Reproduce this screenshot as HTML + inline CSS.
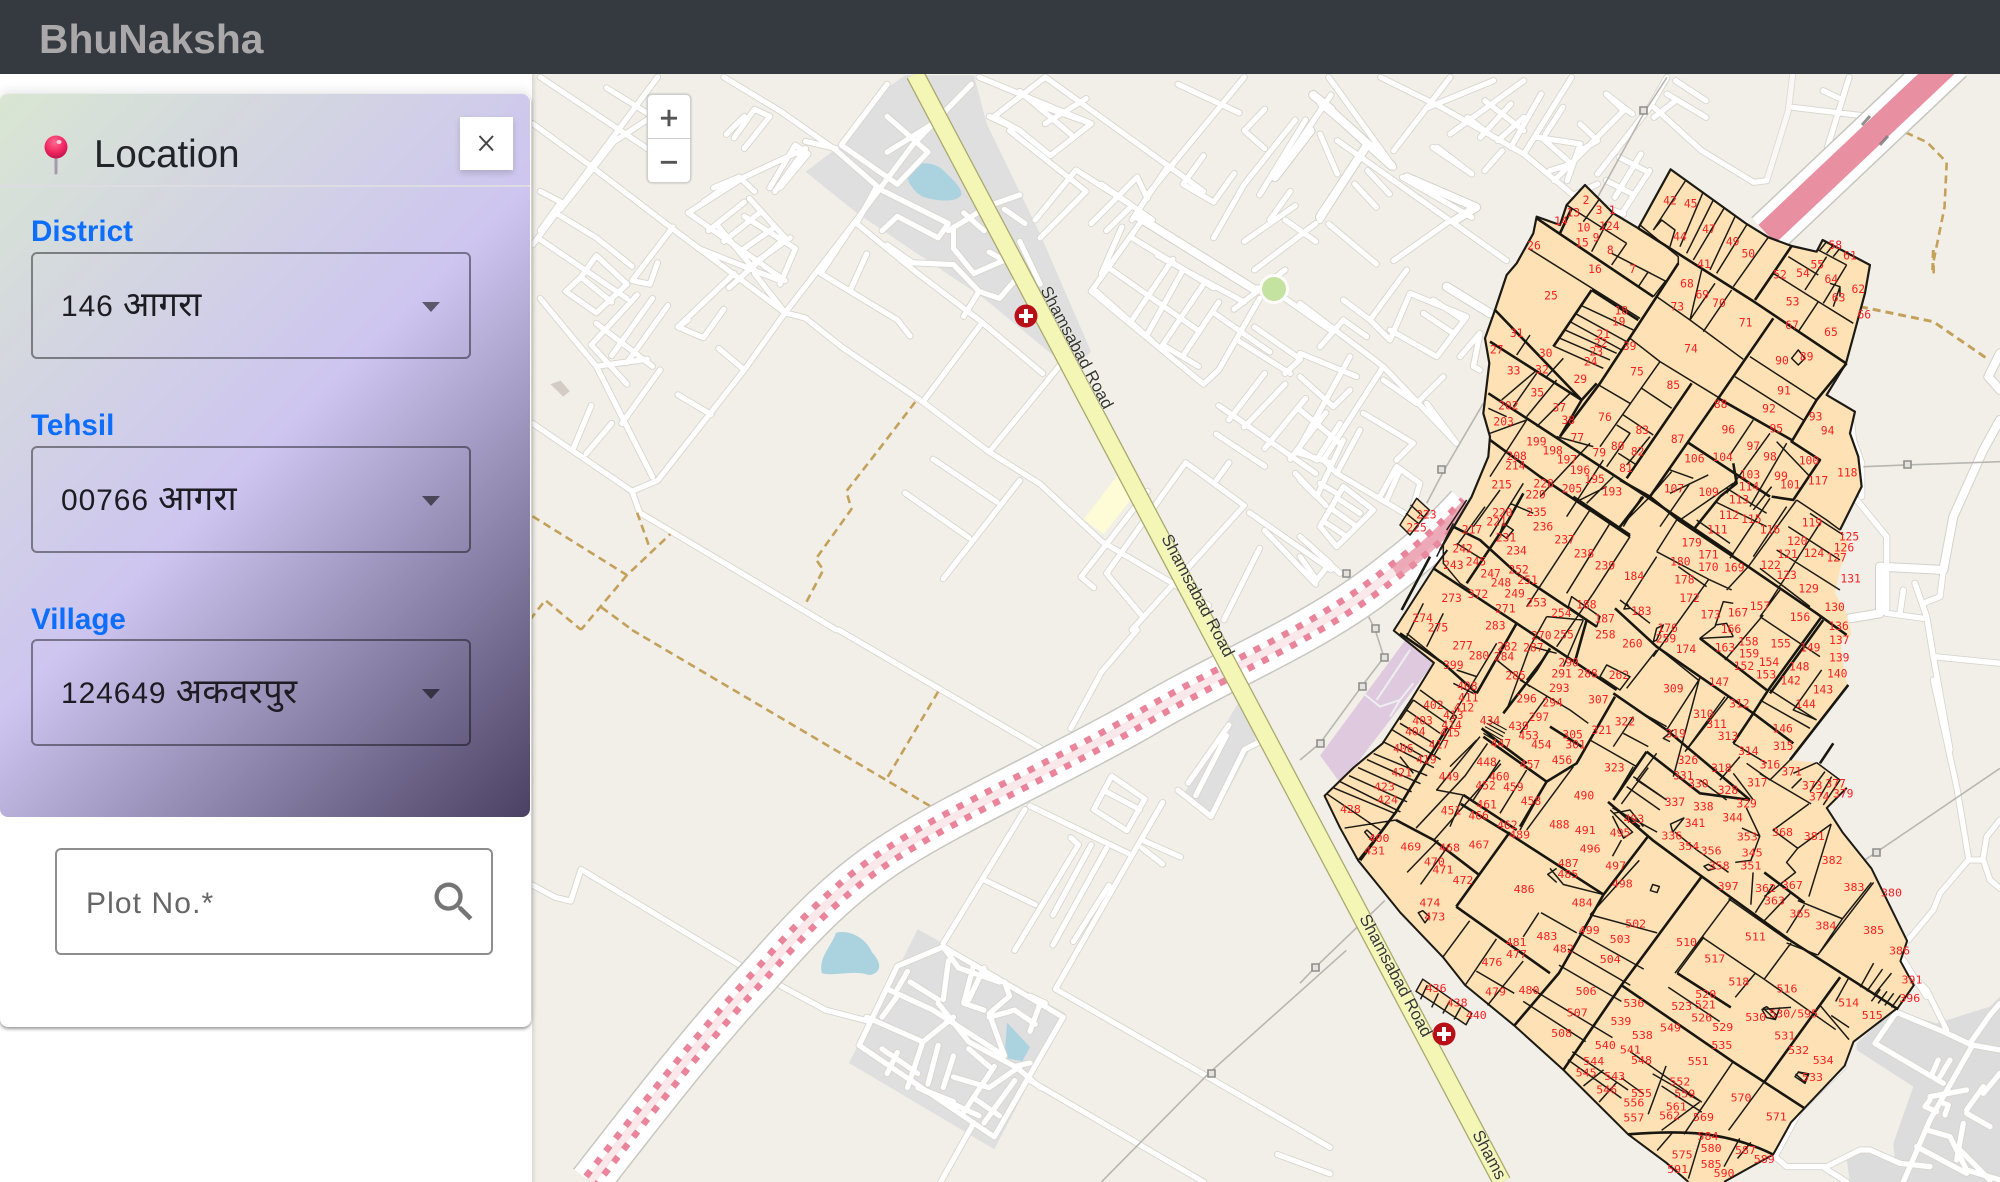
<!DOCTYPE html>
<html lang="en"><head><meta charset="utf-8"><title>BhuNaksha</title>
<style>
html,body{margin:0;padding:0;width:2000px;height:1182px;overflow:hidden;background:#fff;font-family:"Liberation Sans","Noto Sans Devanagari","Lohit Devanagari",FreeSans,"DejaVu Sans",sans-serif}
#map{position:absolute;left:0;top:0;width:2000px;height:1182px;filter:blur(.35px)}
#map path,#map polygon,#map rect,#map circle{vector-effect:non-scaling-stroke}
#map .lb text{font:26px "DejaVu Sans Mono","Liberation Mono",monospace;fill:#ff1f1f;text-anchor:middle;dominant-baseline:central}
#map .lb3 text{font:34px "DejaVu Sans Mono","Liberation Mono",monospace;fill:#ff1f1f;text-anchor:middle;dominant-baseline:central}
.rl{font:17px "Liberation Sans",sans-serif;fill:#36362c;stroke:#fff;stroke-opacity:.45;stroke-width:1.5px;paint-order:stroke}
#hdr{position:absolute;left:0;top:0;width:2000px;height:74px;background:#353940}
#brand{position:absolute;left:39px;top:15px;font-size:40.8px;line-height:48px;font-weight:700;color:#aaa8a9}
#left{position:absolute;left:0;top:74px;width:532px;height:1108px;background:#fff}
#card{position:absolute;left:0;top:94px;width:531px;height:933px;background:#fff;border-radius:8px;box-shadow:0 2px 3px rgba(0,0,0,.4),0 -5px 9px rgba(0,0,0,.07)}
#grad{position:absolute;left:0;top:94px;width:530px;height:723px;border-radius:8px;background:linear-gradient(135deg,#d9e6d2 0%,#cdc5f0 50%,#4a4163 100%)}
#div{position:absolute;left:0;top:185px;width:530px;height:2px;background:#dcdce2}
#loc{position:absolute;left:94px;top:133px;font-size:38.5px;line-height:44px;color:#212529}
#close{position:absolute;left:460px;top:117px;width:53px;height:53px;background:#fff;box-shadow:0 3px 6px rgba(0,0,0,.16)}
.lab{position:absolute;left:31px;font-size:29.6px;line-height:34px;font-weight:700;color:#0d6efd}
.sel{position:absolute;left:31px;width:436px;height:103px;border:2px solid rgba(0,0,0,.42);border-radius:6px}
.sel span{position:absolute;left:28px;top:33px;font-size:30px;line-height:36px;letter-spacing:.9px;color:#1c1c22;white-space:nowrap}
.sel b{font-weight:400;font-size:34.5px;letter-spacing:.3px}
.sel i{position:absolute;left:389px;top:48px;width:0;height:0;border-left:9.5px solid transparent;border-right:9.5px solid transparent;border-top:10px solid rgba(0,0,0,.54)}
#plot{position:absolute;left:55px;top:848px;width:434px;height:103px;border:2px solid #8e8e8e;border-radius:6px;background:#fff}
#plot span{position:absolute;left:29px;top:36px;font-size:30px;line-height:36px;letter-spacing:1.1px;color:#666}
#zc{position:absolute;left:647px;top:94px;width:42px;height:87px;background:#fff;border:1px solid #cfcfcc;border-radius:5px;box-shadow:0 0 2px rgba(0,0,0,.25)}
#zc div{position:absolute;left:0;width:42px;height:43px;text-align:center;font:400 32px/47px "Liberation Sans",sans-serif;color:#555;-webkit-text-stroke:.6px #555}
</style></head><body>
<svg id="map" viewBox="0 0 2000 1182" xmlns="http://www.w3.org/2000/svg">
<defs>
<g id="roads" fill="none" stroke-linecap="round" stroke-linejoin="round">
<g transform="matrix(.5102 0 0 .357 530 70)">
<path d="M5 150L120 270 275 440 500 680 540 695 610 775 770 930 900 1070 1000 1160 1120 1320 1250 1430 1330 1500M380 20L490 115 600 225 680 325 640 430 760 570 880 700 1005 850M5 990L200 1180 215 1240 600 1568M865 40L750 210 640 420 500 680 420 840 250 1150 200 1180M1060 790L900 1070M960 1150L810 1425M885 710L770 930M570 570L720 700 745 745M570 570L640 420M630 610L660 515M440 570L500 680M310 400L500 590M310 400L420 300 540 220 480 340M20 475L190 640M120 270L5 490M165 200L60 390M250 20L120 270M150 50L240 130 165 200M20 20L230 220M280 440L200 590 235 600 250 540M400 570L290 720 340 750 380 670M290 720L310 700M380 670L340 750M370 780L420 840M290 910L355 965M790 1090L915 1210M735 1185L860 1310M1210 1180L1080 1420 1105 1450M1285 1100L1130 1410 1200 1530M1285 1100L1400 1220 1180 1568M1345 1020L1440 1110M1350 940L1540 1130M1370 1100L1345 1150M600 220L540 200M700 40L610 210 720 320 780 230 700 130M790 150L700 230M680 330L820 430 800 470 720 410 690 450M830 440L830 500 870 570 950 520M820 450L900 380 960 350M850 400L890 450M930 390L970 430M900 510L950 550M700 490L750 540 830 545 880 620 850 690M880 620L920 640 950 590 990 610M960 480L1000 600M1010 20L1320 340M880 20L1100 150 1020 240 960 170 910 130 1010 20M960 60L1060 180M940 170L1090 340 1000 470M1070 280L1180 380 1130 450M1070 280L990 420M1200 420L1100 620 1320 880 1350 840 1430 640M1160 440L1120 570M1260 530L1180 700M1280 560L1210 740M1320 600L1240 770M1350 650L1280 800M1210 360L1190 300 1100 430M1250 270L1180 420M1400 20L1210 350M1270 40L1390 120M1320 240L1280 320 1340 370 1380 290M1440 110L1400 170 1440 220M1500 140L1400 320 1340 470M1570 70L1460 300M1490 340L1450 420M1520 140L1430 350M1480 420L1540 480M1460 620L1570 730M1420 720L1510 810 1480 850M1440 850L1370 980M1480 880L1400 1000M1520 920L1440 1060M1560 960L1490 1090M1500 1070L1570 1100M1500 1130L1560 1220M1440 1290L1540 1440M1410 1240L1570 1400M1430 1340L1360 1540M130 710L240 830M50 400L130 470 200 550M20 640L130 830 240 1140M100 580L130 520 190 600 130 680 70 620 100 580M100 580L160 650M210 630L120 770 190 880M240 640L160 800M270 660L190 820M130 830L230 810M255 840L180 990M120 940L85 1060M160 990L110 1075M20 340L60 370 20 450M430 360L500 470 390 610M420 410L520 500 490 600M370 440L440 560M330 500L490 590M520 210L470 330M400 190L440 110 470 130 420 220M385 180L420 130M520 210L545 235 490 330M360 330L410 300 440 340M340 370L390 320M350 450L420 370M380 480L450 400M410 510L480 440M440 540L510 470M1110 620L1220 760M1140 560L1310 730M1180 470L1340 610M1230 520L1400 650M1010 150L1090 80M1000 100L1100 150M1120 320L1220 420M960 170L900 130M1400 480L1500 380M1420 560L1540 430M1380 670L1480 560M1340 680L1450 790M1390 760L1490 850M1240 770L1310 830"/>
</g>
<g transform="matrix(.5102 0 0 .352 530 630)">
<path d="M605 0L1000 335M5 725L50 760 80 770 100 680 420 960M490 1010L580 1080 660 1110M1030 1020L1568 1470M980 500L1180 640M1240 490L1180 640 1030 1020M970 510L810 890M890 710L990 780M1060 590L1075 610 950 910M1100 610L1025 810M1130 620L1025 895M1135 725L1065 885M1205 600L1275 645M1200 620L1240 665M1140 415L1205 480 1170 570 1105 510ZM1130 460L1195 510M1190 0L1120 120 1060 280M1370 270L1290 435M1365 300L1305 470M1440 310L1400 340 1335 530 1270 455M980 1280L1320 1568M870 1400L805 1568M810 900L720 955 645 1180 910 1440 1045 1100 810 900M700 1020L790 1080 930 1210M660 1100L770 1170M810 900L840 960 920 1000M800 1060L860 1170 950 1240 980 1230M820 940L810 1050M870 950L850 1060 890 1080M930 1000L940 1040 900 1090 930 1210M980 1040L1010 1060M830 1100L770 1170 740 1300M720 1200L700 1260M800 1180L780 1290M830 1210L810 1300M910 1240L850 1370M950 1280L890 1400M760 1300L880 1380M830 1270L900 1300 960 1240M860 1190L900 1240M1465 1490L1568 1545M740 970L720 1020M690 1100L720 1040M745 1000L800 1050M690 1190L760 1260M760 1300L830 1340M890 960L860 1050M900 1100L950 1080 990 1120M1000 1060L980 1140M960 1250L1000 1300M870 1330L920 1380M940 1300L900 1380"/>
</g>
<g transform="translate(1320 74) scale(.4337 .3333)">
<path d="M20 10L170 280M140 10L280 100 470 240 590 370 700 420M300 10L170 230M400 20L250 100M470 20L300 180M580 10L470 240M0 90L110 210 0 420M110 210L0 440M0 180L40 300M40 200L300 440 170 560M300 440L430 560M110 290L160 360M80 330L130 400M20 450L130 570M190 310L350 430M270 220L350 300M420 230L380 290M660 60L700 110 540 320M660 60L720 120M510 190L580 270 530 290M500 190L600 210 570 320M600 150L640 200 600 230M560 100L520 180M760 100L640 300M770 130L820 80M800 60L890 130M820 20L890 80M800 10L760 100M880 230L1000 325 1030 320M770 100L880 230M740 240L680 370M760 290L700 410M1090 100L1250 125M1220 10L1170 220M1160 50L1200 75M260 220L350 300M340 130L400 190M380 80L470 170M440 90L370 190M470 130L410 200M510 60L440 220M640 330L590 360M690 250L750 290M660 320L720 360"/>
<path d="M1090 0L1080 110 1030 320" stroke-opacity=".8"/>
</g>
<g transform="translate(1300 270) scale(.3333)">
<path d="M0 100L250 290 470 520M250 290L70 570 110 610 330 740M110 610L180 480M330 740L360 640 290 590 240 680M300 600L260 690M130 650L60 770 110 830 220 720 130 650M100 720L170 770M120 690L180 730M80 760L140 800M0 540L50 570 120 460M0 630L50 680 130 510M0 320L100 410 150 360M0 250L170 320M150 260L0 530M60 230L130 150 200 200M190 430L340 520 290 570M130 90L210 150 320 0M210 150L270 210 330 70 500 140 410 260 270 180M370 130L460 190M400 90L490 150M250 330L350 400 430 320M380 400L470 520M480 260L540 190 520 290 540 300M0 860L50 930 90 880 0 800M0 800L120 910M60 640L110 670M0 420L120 520"/>
</g>
<g transform="translate(1750 960) scale(.3333)">
<path d="M435 155L580 215 665 255 750 270M440 155L375 250 580 370M590 210L530 90 450 10M660 250L720 165 750 130M665 260L540 480 460 666M540 420L525 440 560 455M565 300L545 345M600 300L570 350M580 430L595 435 585 465M75 590L110 620 230 620 330 570 360 570 450 610 540 620M225 625L290 666M530 510L600 530 650 630 750 660M540 410L650 390M650 460L720 500M640 490L620 600M700 400L750 340M650 450L700 380M620 560L720 660M500 560L650 640M280 320L150 450 75 590"/>
</g>
<g transform="translate(1840 680) scale(.3333)">
<path d="M280 0L350 320 385 530M385 540L300 640 280 690 205 780M385 540L430 540 450 600 480 625M430 530L440 470 480 420M190 840L260 950"/>
</g>
</g>
<g id="roadsB" fill="none" stroke-linecap="round" stroke-linejoin="round">
<g transform="translate(1800 250) scale(.3333)">
<path d="M600 510L550 600 460 800 430 960 240 950 240 1090 150 1105M600 310L565 380 600 420"/>
</g>
<g transform="translate(1320 74) scale(.4337 .3333)">
<path d="M0 80L110 210 165 275M200 310L360 400 310 440M110 210L0 430"/>
</g>
<g transform="matrix(.5102 0 0 .357 530 70)">
<path d="M1190 410L1420 615 1458 613M1530 170L1460 300M1535 70L1570 110"/>
</g>
<g transform="translate(1300 270) scale(.3333)"><path d="M440 50L570 130"/></g>
</g>
<g id="roadsC" fill="none" stroke-linecap="round" stroke-linejoin="round">
<g transform="translate(1800 250) scale(.3333)">
<path d="M170 750L260 860 260 940M430 960L420 1040 370 1060M345 1000L380 1100 400 1220 450 1500M400 1220L600 1240M310 1020L300 1090M260 950L260 1090 370 1105M155 520L160 570 185 640 185 740"/>
</g>
</g>
<path id="mw" d="M590 1182C650 1105 700 1040 760 975C800 930 840 885 900 848C960 810 1060 765 1142 718C1220 672 1300 640 1367 592C1410 560 1440 535 1467 505"/>
</defs>
<rect width="2000" height="1182" fill="#f2efe9"/>
<!-- areas -->
<g transform="matrix(.5102 0 0 .357 530 70)">
<polygon points="540,285 610,210 690,60 735,15 870,15 895,150 1000,460 1100,790 1060,840 890,640 640,400" fill="#dfdfdf"/>
<path d="M740 285C750 262 780 250 805 275C825 300 850 335 845 350C835 375 790 365 770 355C755 345 735 310 740 285Z" fill="#aad3df"/>
<polygon points="1165,1110 1190,1180 1125,1300 1085,1260" fill="#fdfcd6"/>
<polygon points="40,880 60,870 78,900 65,915" fill="#d4ccc4"/>
</g>
<g transform="matrix(.5102 0 0 .352 530 630)">
<polygon points="760,850 810,890 1050,1090 910,1475 625,1230 725,950" fill="#dfdfdf"/>
<path d="M600 860C630 850 660 880 670 915C690 945 690 975 665 980C630 965 600 985 572 975C565 930 590 900 600 860Z" fill="#aad3df"/>
<polygon points="935,1115 980,1185 965,1225 930,1215" fill="#aad3df"/>
<polygon points="1395,190 1425,300 1340,535 1280,470" fill="#dfdfdf"/>
</g>
<g transform="translate(1750 960) scale(.3333)">
<polygon points="320,250 430,150 560,190 720,140 750,110 750,666 440,666 430,550 490,380 320,270" fill="#dcdcdc"/>
<polygon points="290,600 340,570 450,610 440,666 300,666" fill="#dcdcdc"/>
</g>
<g transform="matrix(.4464 0 0 .403 1300 550)">
<polygon points="45,510 235,225 300,280 120,540 90,578" fill="#dfc9de"/>
</g>
<!-- roads -->
<use href="#roads" stroke="#d8d5ce" stroke-width="7"/>
<use href="#roadsC" stroke="#d4d1ca" stroke-width="7"/>
<use href="#roadsB" stroke="#d4d1ca" stroke-width="10"/>
<use href="#roads" stroke="#fff" stroke-width="5.2"/>
<use href="#roadsC" stroke="#fff" stroke-width="5.5"/>
<use href="#roadsB" stroke="#fff" stroke-width="8"/>
<!-- purple details -->
<g transform="translate(1300 270) scale(.3333)" fill="none" stroke="#eee" stroke-width="2">
<path d="M190 1270L240 1310 300 1290 340 1240M230 1290L330 1140M270 1340L300 1290"/>
</g>
<!-- power lines -->
<g fill="none" stroke="#b8b6b0" stroke-width="1.6">
<g transform="translate(1300 270) scale(.3333)"><path d="M550 400L430 605 380 700M140 910L225 1078 252 1162M252 1162L186 1248 60 1420 0 1470"/></g>
<g transform="translate(1320 74) scale(.4337 .3333)"><path d="M800 10L750 110 640 370"/></g>
<g transform="translate(1800 250) scale(.3333)"><path d="M190 650L320 645 600 635"/></g>
<g transform="translate(1840 680) scale(.3333)"><path d="M60 550L480 265"/></g>
<g transform="matrix(.5102 0 0 .352 530 630)"><path d="M1600 910L1330 1260 1120 1568"/></g>
<g transform="matrix(.4464 0 0 .403 1300 550)"><path d="M0 1075L35 1035 190 870"/></g>
</g>
<g fill="#e4e2de" stroke="#8f8e8a" stroke-width="1.6">
<rect x="1438" y="466" width="7" height="7"/><rect x="1343" y="570" width="7" height="7"/><rect x="1372" y="625" width="7" height="7"/><rect x="1381" y="654" width="7" height="7"/><rect x="1359" y="683" width="7" height="7"/><rect x="1317" y="740" width="7" height="7"/><rect x="1640" y="107" width="7" height="7"/><rect x="1904" y="461" width="7" height="7"/><rect x="1873" y="849" width="7" height="7"/><rect x="1312" y="964" width="7" height="7"/><rect x="1208" y="1070" width="7" height="7"/>
</g>
<!-- brown paths -->
<g fill="none" stroke="#c4a15a" stroke-width="2.6" stroke-dasharray="8 5">
<g transform="matrix(.5102 0 0 .357 530 70)"><path d="M755 930L680 1070 620 1180 630 1230 560 1370 575 1400 540 1495M5 1250L190 1415 275 1300M210 1240L235 1340M190 1415L100 1568M0 1540L30 1485 100 1568M140 1505L200 1568"/></g>
<g transform="matrix(.5102 0 0 .352 530 630)"><path d="M200 0L790 505M800 175L700 420"/></g>
<g transform="translate(1320 74) scale(.4337 .3333)"><path d="M1350 175L1400 205 1445 265 1440 400 1415 560 1415 600"/></g>
<g transform="translate(1800 250) scale(.3333)" stroke-width="3"><path d="M400 0L398 60M180 170L400 215 560 325"/></g>
</g>
<!-- motorway -->
<g fill="none" stroke-linejoin="round">
<use href="#mw" stroke="#c8c6c0" stroke-width="43"/>
<use href="#mw" stroke="#fff" stroke-width="40"/>
<use href="#mw" stroke="#fbe8ea" stroke-width="9"/>
<use href="#mw" transform="translate(-4 -5.5)" stroke="#e9849b" stroke-width="6.5" stroke-dasharray="7 9"/>
<use href="#mw" transform="translate(4 5.5)" stroke="#e9849b" stroke-width="6.5" stroke-dasharray="7 9"/>
<path d="M1395 572C1420 555 1445 530 1468 505" stroke="#e88fa2" stroke-width="14" opacity=".7"/>
<path d="M1951 60L1767 234" stroke="#c8c6c0" stroke-width="46"/>
<path d="M1951 60L1767 234" stroke="#fff" stroke-width="43"/>
<path d="M1951 60L1767 234" stroke="#e88fa2" stroke-width="25"/>
<path d="M1862 125l8-9M1880 145l8-9" stroke="#777" stroke-width="3" opacity=".8"/>
</g>
<!-- trunk road -->
<path d="M915 74L1502 1182" stroke="#a9a970" stroke-width="19" fill="none"/>
<path d="M915 74L1502 1182" stroke="#f3f6b4" stroke-width="16.4" fill="none"/>
<!-- parcels: fill -->
<g fill="#fee1b5">
<g transform="translate(1400 150) scale(.3333)"><polygon points="120,1200 215,1040 265,920 270,860 250,790 268,640 255,565 285,480 320,375 350,340 400,250 410,200 480,225 500,165 555,105 640,190 715,235 720,225 812,58 1040,222 1105,262 1175,288 1250,305 1268,270 1410,345 1395,430 1360,560 1338,640 1280,735 1365,785 1350,850 1375,920 1385,1010 1320,1140 1345,1180 1320,1260 1305,1330 1340,1390 1355,1455 1290,1490 1345,1605 1180,1810 1180,1200"/></g>
<g transform="matrix(.4464 0 0 .403 1300 550)"><polygon points="330,0 1180,0 1225,340 1090,520 1160,528 1225,590 1180,640 1215,700 1280,790 1360,970 1345,1020 1375,1080 1340,1135 1240,1220 1220,1280 1130,1385 1100,1420 1060,1500 950,1568 870,1568 820,1520 735,1450 590,1290 480,1180 370,1080 320,1010 225,900 130,770 90,690 55,610 120,540 185,480 250,370 300,280 210,200 300,45"/>
<polygon points="260,1095 275,1065 385,1150 372,1178"/></g>
<g transform="translate(1400 480) scale(.3333)"><polygon points="50,55 88,90 30,165 0,135"/><polygon points="1250,848 1320,900 1270,975 1180,880"/></g>
</g>
<!-- parcel lines thin -->
<g fill="none" stroke="#1c1a14" stroke-width="1.5" stroke-linejoin="round">
<g transform="translate(1400 150) scale(.3333)">
<path d="M120 1200L215 1040 265 920 270 860 250 790 268 640 255 565 285 480 320 375 350 340 400 250 410 200 480 225 500 165 555 105 640 190 715 235 720 225 812 58 1040 222 1105 262 1175 288 1250 305 1268 270 1410 345 1395 430 1360 560 1338 640 1280 735 1365 785 1350 850 1375 920 1385 1010 1320 1140" stroke-width="2.2"/>
<path d="M500 165L680 280M600 145L550 215M640 190L600 240M575 305L620 220M680 280L635 345M635 310L800 395M745 365L715 410M720 225L835 320 835 340 770 440M795 395L760 440M760 240L785 210 825 240 810 290M858 90L760 240M910 125L840 290M940 150L860 310M972 175L880 330M1005 200L930 360M1040 225L950 370M1105 262L1000 410M1165 320L1255 375M1120 370L1255 455M1255 455L1195 545M1280 320L1215 420M1340 345L1270 460M1255 300L1340 345M1280 275L1260 300M1300 285L1280 310M1320 295L1300 320M1255 455L1360 520M1320 410L1300 470M1290 400L1320 410 1320 440M1175 625L1195 600 1215 625 1195 645ZM905 360L870 510M945 400L870 510M995 420L910 545M770 440L870 510 1030 628M690 565L780 635 960 745M1050 620L1250 750M1005 680L1210 810M780 635L600 890M725 715L815 775M596 705L690 760M670 795L760 855M650 825L690 850 620 950M750 860L680 945M655 910L710 945M385 295L720 505M540 465L700 540M525 490L680 575M510 515L665 600M495 540L650 610M480 565L630 630M465 590L610 655M390 555L350 615M490 625L440 680M405 665L305 750M410 670L340 770M470 690L380 800M510 730L410 830M265 775L320 800M270 850L380 810M380 810L270 980M470 860L580 890M570 880L420 1040M610 930L500 1100M640 980L560 1060M620 1010L540 1050M725 1040L670 1130M880 985L810 960M815 965L750 1040M925 975L810 1030M870 1000L780 1130M1000 1000L840 1110M980 1015L1100 1090M945 1055L1100 1130M1115 1010L1060 1080M1160 1070L1060 1220M1130 875L1230 980M1160 880L1050 1070M1110 850L980 1030M1060 810L990 915M1190 1050L1280 1110M1280 1110L1320 1140"/>
</g>
<g transform="translate(1400 480) scale(.3333)">
<path d="M50 55L88 90 30 165 0 135ZM32 75L70 110M18 100L55 130M1250 848L1320 900 1270 975M1250 848L1180 880M1205 895L1175 925M1275 875L1230 935M1295 890L1260 950M1320 900L1280 960"/>
<path d="M1110 55L990 235M1190 60L1045 260 980 330M1260 130L1100 380M1230 100L1330 165M1165 140L1320 240M1130 210L1320 330M1080 265L1230 380M1140 330L1080 410M1080 410L1260 530M1090 405L975 540M1265 570L1180 690 1250 720M1110 630L1250 720M1080 660L1230 745M1060 700L1000 790M985 650L860 810M975 650L855 815M900 595L800 750M1000 790L1100 850M1020 830L960 900M1060 700L1180 790M1170 840L1110 900M1000 880L1060 960M930 300L770 215M925 300L760 530M995 330L930 300M770 230L680 370M830 120L770 215M890 120L990 190M835 260L920 320M660 360L750 430M690 170L580 340 470 500M570 90L380 380M630 130L500 340M750 50L660 140M770 510L680 625M895 600L770 500M1000 370L970 365 945 440 900 475 1000 470M945 435L980 430 1000 470M770 480L790 435 770 445 760 485ZM620 555L690 590 660 630 600 590ZM680 370L690 385 672 387ZM515 350L600 410 590 440 505 380ZM440 410L550 420M440 410L390 500M550 420L490 560M395 500L470 520M290 490L230 590 170 570M160 130L110 230M170 190L250 240M200 60L140 150M255 80L175 190M300 30L220 140M370 10L270 170M330 70L400 100M310 130L340 150 320 175 300 160ZM210 330L180 310 130 250 130 190M70 370L20 470M130 400L80 500M20 460L130 550M350 430L290 540 390 620M390 500L320 690M450 510L380 600M360 600L510 690M385 600L310 700M510 690L565 730M440 650L360 760M570 780L710 860M700 710L640 800M710 690L800 740M670 760L745 800M700 860L640 960M700 890L800 960M680 920L780 990M820 750L790 775 810 785M820 890L900 590M900 900L980 960M770 820L710 900 800 960M60 630L170 710M40 660L140 730M20 690L120 760M0 730L100 790M0 790L70 830M0 830L40 880M170 710L100 830M230 590L150 720M40 660L0 720M160 610L220 640M240 770L110 930 190 945M230 780L150 860M300 840L220 960M380 870L300 1000M190 945L150 1040M1040 850L1110 900M440 905L360 1050M520 860L380 1050M630 970L720 1040M640 1000L690 990 730 1040"/>
<path d="M250 760L300 790M255 750L305 780M255 740L310 770M260 730L315 760M265 720L320 750" stroke-width="1.2"/>
</g>
<g transform="matrix(.4464 0 0 .403 1300 550)">
<path d="M330 0L300 45 210 200 300 280 250 370 185 480 120 540 55 610 90 690 130 770 225 900 320 1010 370 1080 480 1180 590 1290 735 1450 820 1520 870 1568M950 1568L1060 1500 1100 1420 1130 1385 1220 1280 1240 1220 1340 1135 1375 1080 1345 1020 1360 970 1280 790 1215 700 1180 640 1225 590" stroke-width="2"/>
<path d="M260 1095L275 1065 385 1150 372 1178ZM285 1080L270 1115M310 1100L295 1135M335 1120L320 1150M360 1135L345 1165M265 900L280 925 290 910 275 895ZM145 700L160 720 165 710 150 695Z"/>
<path d="M60 605L180 695M75 590L215 655M90 575L225 650M110 560L240 625M130 540L250 600M150 520L270 580M165 505L285 560M185 475L300 540M205 445L315 520M100 690L215 670M130 770L215 650M260 690L370 560 420 480M300 720L450 530M240 800L310 720M270 830L335 730M320 1010L380 920M370 1080L440 965M420 1130L500 1020M395 1045L480 1100M500 1120L640 1220M520 1090L700 1210M580 1030L720 1120M600 990L740 1080M625 950L770 1040M650 905L800 950M540 900L620 950M535 900L500 960M560 790L590 830 680 855M610 1245L735 1340M600 1265L720 1360M635 1330L680 1290M670 1370L710 1320M740 1245L900 1370M720 1310L770 1350M820 1280L780 1400M790 1300L900 1370M810 1330L900 1395M810 1440L895 1370M860 1450L970 1270M1040 1320L960 1440M800 1490L835 1445M870 1560L900 1450M950 1530L985 1460M980 1510L1010 1470M965 865L840 1050M900 960L1040 1065 1200 1190M1040 1065L1100 975M1020 1050L975 1110M905 960L845 1050M845 1050L965 1135M825 1085L940 1170M960 865L1095 970M1090 975L1160 1005M1160 1005L1215 915M1115 870L1215 915M1285 825L1160 1005M1190 680L1140 860M1285 1025L1255 1085M1305 1040L1270 1095M1325 1050L1285 1105M1300 1090L1280 1120M1315 1095L1295 1125M1330 1100L1310 1130M1345 1105L1325 1135M1230 1060L1200 1120M1165 1130L1230 1215M1190 1155L1230 1185M1100 1135L1035 1140 1045 1160 1065 1165 1075 1135M1110 1300L1130 1320 1140 1300 1115 1295M790 830L805 835 800 850 785 845ZM575 790L555 805 575 825M695 645L745 700 725 715 700 660M830 680L860 665 835 700ZM915 780L930 790 915 795 905 785ZM1140 630L1060 695 1115 740 1090 775 1110 800 1040 860M1190 680L1115 740M990 690L1030 710 1010 770 975 775M1145 630L1030 555M1000 640L1030 710M840 700L890 745 960 800M1015 800L1010 880M1060 830L1020 900M1100 850L1040 920M1130 880L1090 950M1215 915L1280 825M700 760L720 720M780 540L720 630M700 640L800 700M760 770L650 905"/>
</g>
<g transform="translate(1750 960) scale(.3333)"><path d="M135 350L145 337 175 345 165 370ZM40 145L50 140 80 165 75 178Z"/></g>
</g>
<!-- parcel thick -->
<g fill="none" stroke="#181610" stroke-width="2.6" stroke-linejoin="round">
<g transform="translate(1400 150) scale(.3333)">
<path d="M410 205L760 440M715 235L1062 455 1338 640M835 340L770 440 600 700 480 860M1120 505L955 745 750 1040M1175 288L1065 450M1340 640L1250 750 1175 875 1260 930 1180 1050 1115 1040M955 745L1175 870M875 700L680 985M285 480L545 750M270 575L545 750M590 700L545 750 480 860M265 730L740 1040M270 870L420 980 510 1040 690 1160M480 250L515 175M575 420L460 590M575 420L715 510M860 875L1110 1040M1000 940L1010 1000 960 1040M960 1040L880 1140M740 1040L830 1100M830 1100L1000 1215"/>
</g>
<g transform="translate(1400 480) scale(.3333)">
<path d="M660 0L750 50 835 120 1045 260 1250 400 1340 465M520 50L690 165M730 50L660 140M1265 410L1105 630 1060 700 1000 790M1270 420L1110 640M1345 615L1170 840M100 265L350 430 650 630M640 640L800 750 1050 960M645 385L770 500 900 590 1060 700 1180 790M900 475L1100 630M160 140L240 180 350 280 590 440M0 460L130 550 230 640M645 650L570 780 530 850 440 905M250 770L440 905M190 945L350 1050M560 420L525 545M350 430L230 640M440 905L360 1040M740 815L900 940 1050 960M740 815L640 960M450 740L545 800M450 505L410 570 310 700M1260 850L1300 790M245 745L300 790 380 850M200 310L320 130 370 40M90 230L5 390"/>
</g>
<g transform="matrix(.4464 0 0 .403 1300 550)">
<path d="M215 670L300 720 400 805M360 630L470 705 680 855M350 885L560 1050M780 710L680 855 580 1050 480 1180M470 700L350 885M690 625L790 720 900 810 1100 970 1340 1140M900 810L720 1080 590 1290M720 1080L970 1270 1130 1385M1210 1060L1040 1320M1040 1320L970 1270M735 1450C850 1440 950 1440 1060 1500M135 770L215 650 330 440M1040 800L1130 875M845 1050L965 1135"/>
</g>
</g>
<!-- labels -->
<g class="lb3" transform="translate(1400 150) scale(.3333)">
<text x="558" y="150">2</text><text x="520" y="187">13</text><text x="597" y="180">3</text><text x="637" y="180">1</text><text x="483" y="213">14</text><text x="551" y="232">10</text><text x="628" y="228">124</text><text x="546" y="278">15</text><text x="588" y="263">9</text><text x="631" y="300">8</text><text x="402" y="287">26</text><text x="585" y="357">16</text><text x="698" y="357">7</text><text x="810" y="152">42</text><text x="872" y="160">45</text><text x="927" y="237">47</text><text x="840" y="260">44</text><text x="998" y="275">49</text><text x="1045" y="311">50</text><text x="912" y="342">41</text><text x="861" y="401">68</text><text x="907" y="434">69</text><text x="957" y="459">70</text><text x="832" y="470">73</text><text x="1037" y="517">71</text><text x="1140" y="374">52</text><text x="1209" y="369">54</text><text x="1252" y="344">55</text><text x="1306" y="285">58</text><text x="1350" y="317">61</text><text x="1294" y="387">64</text><text x="1375" y="417">62</text><text x="1316" y="442">63</text><text x="1178" y="454">53</text><text x="1393" y="494">66</text><text x="1293" y="546">65</text><text x="1176" y="525">67</text><text x="453" y="437">25</text><text x="664" y="481">18</text><text x="656" y="514">19</text><text x="610" y="552">21</text><text x="602" y="579">22</text><text x="589" y="604">23</text><text x="572" y="635">24</text><text x="689" y="588">39</text><text x="350" y="549">31</text><text x="437" y="609">30</text><text x="290" y="599">27</text><text x="341" y="662">33</text><text x="426" y="659">32</text><text x="541" y="687">29</text><text x="711" y="664">75</text><text x="873" y="596">74</text><text x="1146" y="631">90</text><text x="1220" y="620">89</text><text x="820" y="705">85</text><text x="1152" y="721">91</text><text x="1107" y="776">92</text><text x="962" y="762">88</text><text x="1247" y="800">93</text><text x="1283" y="842">94</text><text x="1129" y="836">95</text><text x="985" y="838">96</text><text x="727" y="840">83</text><text x="615" y="801">76</text><text x="412" y="728">35</text><text x="478" y="773">37</text><text x="505" y="810">38</text><text x="325" y="766">202</text><text x="311" y="815">203</text><text x="532" y="862">77</text><text x="833" y="867">87</text><text x="1060" y="888">97</text><text x="409" y="875">199</text><text x="653" y="888">80</text><text x="713" y="905">82</text><text x="598" y="907">79</text><text x="458" y="902">198</text><text x="350" y="918">208</text><text x="1110" y="920">98</text><text x="1227" y="932">100</text><text x="883" y="926">106</text><text x="968" y="921">104</text><text x="501" y="929">197</text><text x="346" y="947">214</text><text x="678" y="954">81</text><text x="540" y="960">196</text><text x="1342" y="968">118</text><text x="1050" y="973">103</text><text x="1143" y="978">99</text><text x="1254" y="992">117</text><text x="584" y="987">195</text><text x="1171" y="1004">101</text><text x="305" y="1004">215</text><text x="431" y="1001">228</text><text x="516" y="1015">205</text><text x="822" y="1015">107</text><text x="1047" y="1009">114</text><text x="926" y="1026">109</text><text x="636" y="1025">193</text><text x="407" y="1033">229</text><text x="1017" y="1049">113</text>
</g>
<g class="lb3" transform="translate(1400 480) scale(.3333)">
<text x="987" y="105">112</text><text x="1054" y="117">115</text><text x="952" y="148">111</text><text x="1110" y="148">116</text><text x="307" y="98">220</text><text x="410" y="96">235</text><text x="290" y="124">221</text><text x="79" y="104">223</text><text x="50" y="143">225</text><text x="216" y="148">217</text><text x="429" y="140">236</text><text x="318" y="172">231</text><text x="494" y="178">237</text><text x="875" y="187">179</text><text x="1192" y="183">120</text><text x="1236" y="128">119</text><text x="1347" y="170">125</text><text x="1332" y="202">126</text><text x="188" y="205">242</text><text x="350" y="211">234</text><text x="552" y="220">238</text><text x="925" y="224">171</text><text x="1163" y="222">121</text><text x="1242" y="219">124</text><text x="1310" y="232">127</text><text x="228" y="245">245</text><text x="160" y="255">243</text><text x="615" y="256">239</text><text x="841" y="245">180</text><text x="925" y="261">170</text><text x="1003" y="263">169</text><text x="1112" y="255">122</text><text x="1160" y="285">123</text><text x="272" y="280">247</text><text x="356" y="269">252</text><text x="383" y="300">251</text><text x="303" y="307">248</text><text x="702" y="288">184</text><text x="853" y="298">178</text><text x="1352" y="296">131</text><text x="1226" y="326">129</text><text x="344" y="340">249</text><text x="234" y="342">372</text><text x="155" y="354">273</text><text x="869" y="354">172</text><text x="1080" y="378">157</text><text x="1304" y="381">130</text><text x="410" y="368">253</text><text x="559" y="374">188</text><text x="316" y="385">271</text><text x="484" y="399">254</text><text x="724" y="393">183</text><text x="932" y="403">173</text><text x="1014" y="398">167</text><text x="1200" y="411">156</text><text x="68" y="414">274</text><text x="614" y="415">187</text><text x="114" y="442">275</text><text x="286" y="436">283</text><text x="803" y="444">176</text><text x="993" y="447">166</text><text x="1316" y="438">136</text><text x="424" y="466">270</text><text x="491" y="463">255</text><text x="616" y="463">258</text><text x="1318" y="480">137</text><text x="798" y="476">259</text><text x="1045" y="485">158</text><text x="1142" y="491">155</text><text x="697" y="491">260</text><text x="1231" y="503">149</text><text x="188" y="496">277</text><text x="322" y="499">282</text><text x="400" y="503">287</text><text x="858" y="507">174</text><text x="975" y="502">163</text><text x="1047" y="521">159</text><text x="237" y="526">280</text><text x="312" y="530">284</text><text x="1318" y="532">139</text><text x="1107" y="546">154</text><text x="506" y="548">290</text><text x="1032" y="558">152</text><text x="160" y="555">399</text><text x="1198" y="560">148</text><text x="1098" y="584">153</text><text x="485" y="580">291</text><text x="563" y="580">288</text><text x="1312" y="581">140</text><text x="657" y="585">262</text><text x="347" y="587">285</text><text x="1172" y="601">142</text><text x="957" y="606">147</text><text x="202" y="618">408</text><text x="478" y="624">293</text><text x="820" y="625">309</text><text x="1269" y="628">143</text><text x="205" y="652">411</text><text x="380" y="655">296</text><text x="595" y="658">307</text><text x="458" y="667">294</text><text x="1018" y="670">312</text><text x="1217" y="672">144</text><text x="100" y="675">402</text><text x="192" y="682">412</text><text x="910" y="702">310</text><text x="160" y="705">413</text><text x="417" y="711">297</text><text x="270" y="721">434</text><text x="68" y="721">403</text><text x="675" y="724">322</text><text x="950" y="732">311</text><text x="155" y="735">414</text><text x="356" y="738">439</text><text x="1148" y="746">146</text><text x="605" y="750">321</text><text x="46" y="755">404</text><text x="150" y="758">415</text><text x="518" y="763">305</text><text x="827" y="760">319</text><text x="386" y="766">453</text><text x="984" y="768">313</text><text x="117" y="793">417</text><text x="303" y="790">447</text><text x="424" y="793">454</text><text x="527" y="793">301</text><text x="1150" y="798">315</text><text x="1045" y="813">314</text><text x="10" y="805">406</text><text x="79" y="838">419</text><text x="486" y="840">456</text><text x="864" y="840">326</text><text x="260" y="846">448</text><text x="390" y="853">457</text><text x="1110" y="853">316</text><text x="643" y="862">323</text><text x="964" y="864">318</text><text x="1175" y="875">371</text><text x="5" y="877">421</text><text x="147" y="889">449</text><text x="298" y="890">460</text><text x="850" y="887">331</text><text x="895" y="911">330</text><text x="1072" y="908">317</text><text x="1307" y="911">377</text><text x="1237" y="917">373</text><text x="257" y="917">452</text><text x="340" y="921">459</text><text x="984" y="930">328</text><text x="1330" y="941">379</text><text x="552" y="946">490</text><text x="1258" y="950">374</text><text x="825" y="966">337</text><text x="393" y="963">458</text><text x="1040" y="970">329</text><text x="910" y="980">338</text><text x="260" y="974">461</text><text x="153" y="991">451</text><text x="236" y="1007">466</text><text x="998" y="1012">344</text><text x="702" y="1017">493</text><text x="885" y="1029">341</text><text x="322" y="1035">462</text><text x="478" y="1034">488</text>
</g>
<g class="lb" transform="matrix(.4464 0 0 .403 1300 550)">
<text x="189" y="588">423</text><text x="196" y="621">424</text><text x="113" y="644">428</text><text x="177" y="716">400</text><text x="248" y="738">469</text><text x="335" y="740">468</text><text x="401" y="732">467</text><text x="167" y="748">431</text><text x="301" y="775">470</text><text x="320" y="795">471</text><text x="365" y="820">472</text><text x="492" y="708">489</text><text x="639" y="696">491</text><text x="650" y="743">496</text><text x="717" y="703">495</text><text x="601" y="779">487</text><text x="707" y="784">497</text><text x="600" y="806">485</text><text x="722" y="829">498</text><text x="502" y="843">486</text><text x="632" y="877">484</text><text x="291" y="877">474</text><text x="302" y="911">473</text><text x="752" y="928">502</text><text x="648" y="945">499</text><text x="553" y="959">483</text><text x="717" y="967">503</text><text x="484" y="975">481</text><text x="590" y="990">482</text><text x="485" y="1004">477</text><text x="430" y="1024">476</text><text x="695" y="1016">504</text><text x="438" y="1097">479</text><text x="513" y="1094">480</text><text x="641" y="1096">506</text><text x="305" y="1088">436</text><text x="352" y="1124">438</text><text x="395" y="1156">440</text><text x="621" y="1149">507</text><text x="586" y="1200">508</text><text x="866" y="975">510</text><text x="1020" y="961">511</text><text x="929" y="1015">517</text><text x="983" y="1072">518</text><text x="1091" y="1090">516</text><text x="909" y="1103">520</text><text x="908" y="1129">521</text><text x="855" y="1133">523</text><text x="748" y="1126">536</text><text x="719" y="1171">539</text><text x="767" y="1205">538</text><text x="830" y="1187">549</text><text x="900" y="1162">526</text><text x="947" y="1185">529</text><text x="1021" y="1160">530</text><text x="1106" y="1152">530/595</text><text x="1229" y="1124">514</text><text x="1282" y="1156">515</text><text x="1086" y="1207">531</text><text x="1117" y="1242">532</text><text x="1172" y="1267">534</text><text x="1148" y="1310">533</text><text x="945" y="1230">535</text><text x="892" y="1270">551</text><text x="684" y="1230">540</text><text x="740" y="1241">541</text><text x="765" y="1267">548</text><text x="658" y="1270">544</text><text x="641" y="1298">545</text><text x="705" y="1307">543</text><text x="687" y="1341">546</text><text x="851" y="1320">552</text><text x="765" y="1349">555</text><text x="862" y="1350">559</text><text x="988" y="1360">570</text><text x="748" y="1373">556</text><text x="843" y="1382">561</text><text x="1067" y="1407">571</text><text x="904" y="1409">569</text><text x="748" y="1410">557</text><text x="828" y="1405">562</text><text x="914" y="1456">584</text><text x="921" y="1485">580</text><text x="998" y="1491">587</text><text x="1040" y="1513">589</text><text x="856" y="1502">575</text><text x="921" y="1525">585</text><text x="846" y="1538">591</text><text x="950" y="1548">590</text><text x="1081" y="702">368</text><text x="1152" y="711">381</text><text x="1002" y="713">353</text><text x="1013" y="752">345</text><text x="1010" y="784">351</text><text x="1192" y="771">382</text><text x="1241" y="838">383</text><text x="1325" y="851">380</text><text x="1103" y="833">367</text><text x="1043" y="840">362</text><text x="1063" y="872">363</text><text x="1120" y="904">365</text><text x="1178" y="933">384</text><text x="1285" y="945">385</text><text x="1343" y="995">386</text><text x="1371" y="1067">391</text><text x="1366" y="1114">396</text><text x="959" y="835">397</text><text x="833" y="710">336</text><text x="871" y="736">354</text><text x="921" y="748">356</text><text x="939" y="784">358</text>
</g>
<!-- markers -->
<circle cx="1274" cy="289" r="15" fill="#fff" opacity=".8"/><circle cx="1274" cy="289" r="12" fill="#c5e3a0"/>
<g><circle cx="1026" cy="316" r="11.5" fill="#b80f18"/><path d="M1026 309v14M1019 316h14" stroke="#fff" stroke-width="4"/></g>
<g><circle cx="1444" cy="1034" r="11.5" fill="#b80f18"/><path d="M1444 1027v14M1437 1034h14" stroke="#fff" stroke-width="4"/></g>
<text class="rl" transform="translate(1040 290) rotate(62)">Shamsabad Road</text>
<text class="rl" transform="translate(1161 538) rotate(62)">Shamsabad Road</text>
<text class="rl" transform="translate(1359 918) rotate(62)">Shamsabad Road</text>
<text class="rl" transform="translate(1472 1134) rotate(62)">Shams</text>
</svg>
<div id="left"></div>
<div style="position:absolute;left:532px;top:74px;width:5px;height:1108px;background:linear-gradient(90deg,rgba(0,0,0,.09),rgba(0,0,0,0))"></div>
<div id="hdr"><div id="brand">BhuNaksha</div></div>
<div id="card"></div>
<div id="grad"></div>
<div id="div"></div>
<svg style="position:absolute;left:40px;top:130px" width="32" height="48" viewBox="0 0 32 48"><defs><radialGradient id="pg" cx=".45" cy=".3" r=".75"><stop offset="0" stop-color="#ff6a90"/><stop offset=".6" stop-color="#f0245f"/><stop offset="1" stop-color="#b5124a"/></radialGradient></defs><path d="M16 22V43" stroke="#a79aae" stroke-width="3" stroke-linecap="round"/><circle cx="16" cy="17" r="11.5" fill="url(#pg)"/><ellipse cx="19" cy="12" rx="2.5" ry="2" fill="#ffd0dc"/></svg>
<div id="loc">Location</div>
<div id="close"><svg width="53" height="53" viewBox="0 0 53 53"><path d="M19.5 19L33 33.5M33 19L19.5 33.5" stroke="#444" stroke-width="2" fill="none"/></svg></div>
<div class="lab" style="top:215px">District</div>
<div class="sel" style="top:252px"><span>146 <b>आगरा</b></span><i></i></div>
<div class="lab" style="top:409px">Tehsil</div>
<div class="sel" style="top:446px"><span>00766 <b>आगरा</b></span><i></i></div>
<div class="lab" style="top:603px">Village</div>
<div class="sel" style="top:639px"><span>124649 <b>अकवरपुर</b></span><i></i></div>
<div id="plot"><span>Plot No.*</span></div>
<svg style="position:absolute;left:428px;top:876px" width="52" height="52" viewBox="0 0 24 24"><path fill="#757575" d="M15.5 14h-.79l-.28-.27C15.41 12.59 16 11.11 16 9.5 16 5.91 13.09 3 9.5 3S3 5.91 3 9.5 5.91 16 9.5 16c1.61 0 3.09-.59 4.23-1.57l.27.28v.79l5 4.99L20.49 19l-4.99-5zm-6 0C7.01 14 5 11.99 5 9.5S7.01 5 9.5 5 14 7.01 14 9.5 11.99 14 9.5 14z"/></svg>
<div id="zc"><div style="top:0;border-bottom:1px solid #ccc">+</div><div style="top:44px">−</div></div>
</body></html>
